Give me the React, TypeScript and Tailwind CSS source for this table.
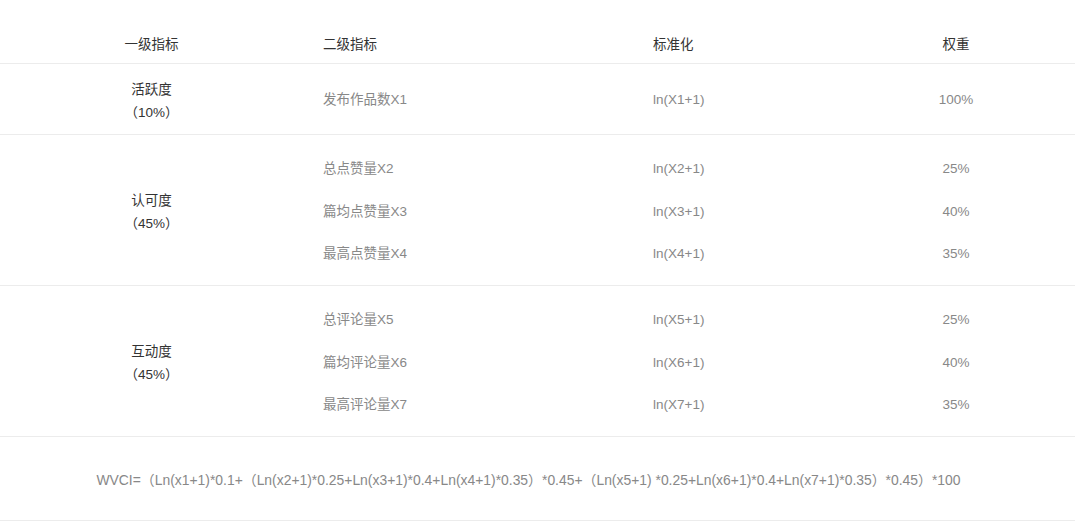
import React from "react";

type Item = { name: string; norm: string; weight: string };
type Group = { title: string; share: string; items: Item[] };

const groups: Group[] = [
  {
    title: "活跃度",
    share: "（10%）",
    items: [{ name: "发布作品数X1", norm: "ln(X1+1)", weight: "100%" }],
  },
  {
    title: "认可度",
    share: "（45%）",
    items: [
      { name: "总点赞量X2", norm: "ln(X2+1)", weight: "25%" },
      { name: "篇均点赞量X3", norm: "ln(X3+1)", weight: "40%" },
      { name: "最高点赞量X4", norm: "ln(X4+1)", weight: "35%" },
    ],
  },
  {
    title: "互动度",
    share: "（45%）",
    items: [
      { name: "总评论量X5", norm: "ln(X5+1)", weight: "25%" },
      { name: "篇均评论量X6", norm: "ln(X6+1)", weight: "40%" },
      { name: "最高评论量X7", norm: "ln(X7+1)", weight: "35%" },
    ],
  },
];

const font = { fontFamily: '"Liberation Sans", "Noto Sans CJK SC", sans-serif' };

const App: React.FC = () => {
  return (
    <div className="w-[1080px] h-[524px] bg-white pt-6 text-[13.5px]" style={font}>
      <div className="w-[1075px]">
        {/* header */}
        <div className="flex h-10 pt-[3px] items-center text-[#333] border-b border-[#ececec]">
          <div className="w-[303px] text-center">一级指标</div>
          <div className="w-[330px] pl-5">二级指标</div>
          <div className="w-[204px] pl-5">标准化</div>
          <div className="flex-1 text-center">权重</div>
        </div>

        {groups.map((g) => (
          <div
            key={g.title}
            className={`flex items-center border-b border-[#ececec] ${
              g.items.length > 1 ? "pt-[13px] pb-[9.5px]" : "pt-[13.5px] pb-[10.5px]"
            }`}
          >
            <div className="w-[303px] text-center text-[#333] leading-[23px]">
              <div>{g.title}</div>
              <div>{g.share}</div>
            </div>
            <div className="flex-1 text-[#888]">
              {g.items.map((it) => (
                <div key={it.name} className="flex h-[42.5px] items-center">
                  <div className="w-[330px] pl-5">{it.name}</div>
                  <div className="w-[204px] pl-5">{it.norm}</div>
                  <div className="flex-1 text-center">{it.weight}</div>
                </div>
              ))}
            </div>
          </div>
        ))}

        {/* formula */}
        <div className="flex h-[84px] pt-[3px] items-center justify-center pr-[18px] border-b border-[#ececec] text-[#888] text-[13.9px]">
          WVCI=（Ln(x1+1)*0.1+（Ln(x2+1)*0.25+Ln(x3+1)*0.4+Ln(x4+1)*0.35）*0.45+（Ln(x5+1) *0.25+Ln(x6+1)*0.4+Ln(x7+1)*0.35）*0.45）*100
        </div>
      </div>
    </div>
  );
};

export default App;
